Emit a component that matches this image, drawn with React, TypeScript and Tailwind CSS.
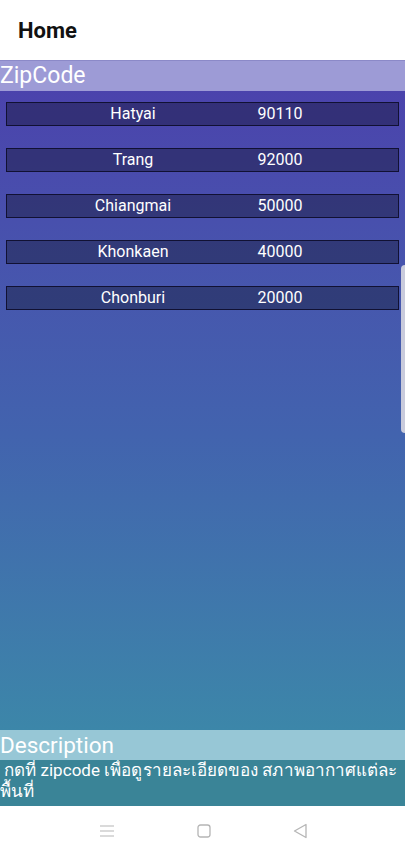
const zipcodes = [
  { name: "Hatyai", zip: "90110" },
  { name: "Trang", zip: "92000" },
  { name: "Chiangmai", zip: "50000" },
  { name: "Khonkaen", zip: "40000" },
  { name: "Chonburi", zip: "20000" },
];

export default function App() {
  return (
    <div
      className="relative flex h-[856px] w-[405px] flex-col overflow-hidden bg-white"
      style={{ fontFamily: "Roboto, 'Noto Sans', sans-serif" }}
    >
      {/* Header */}
      <div className="flex h-[60px] shrink-0 items-center px-[18px] shadow-sm">
        <h1 className="text-[22px] font-bold text-[#111]">Home</h1>
      </div>

      {/* Main */}
      <div className="flex flex-1 flex-col bg-gradient-to-b from-[#4b40ac] via-[#4263ae] to-[#3a8fa7]">
        <div className="h-[31px] border-t border-[#8b89c8] bg-[#9d9bd6] text-[23px] leading-[30px] text-white">
          ZipCode
        </div>

        <div className="flex flex-1 flex-col gap-[22px] px-[6px] pt-[11px]">
          {zipcodes.map((z) => (
            <div
              key={z.zip}
              className="flex h-[24px] items-center border border-[#111133] bg-black/30 text-[16px] text-white"
            >
              <span className="ml-[46px] w-[160px] text-center">{z.name}</span>
              <span className="w-[134px] text-center">{z.zip}</span>
            </div>
          ))}
        </div>

        <div className="h-[30px] bg-[#97c7d6] text-[22.5px] leading-[30px] text-white">
          Description
        </div>
        <div className="h-[46px] overflow-hidden bg-[#3a8497] text-[17px] leading-[21px] tracking-[0.05px] text-white">
          <p className="whitespace-nowrap pl-[4px]">กดที่ zipcode เพื่อดูรายละเอียดของ สภาพอากาศแต่ละ</p>
          <p>พื้นที่</p>
        </div>
      </div>

      {/* Nav bar */}
      <div className="flex h-[50px] shrink-0 items-center justify-center gap-[82px] bg-white text-[#b5b5b5]">
        <svg width="16" height="14" viewBox="0 0 16 14" fill="none" stroke="currentColor" strokeWidth="1.2">
          <path d="M1 2h14M1 7h14M1 12h14" />
        </svg>
        <svg width="14" height="14" viewBox="0 0 14 14" fill="none" stroke="currentColor" strokeWidth="1.3">
          <rect x="1" y="1" width="12" height="12" rx="2.5" />
        </svg>
        <svg width="14" height="16" viewBox="0 0 14 16" fill="none" stroke="currentColor" strokeWidth="1.3" strokeLinejoin="round">
          <path d="M13 1.5v13L1.5 8z" />
        </svg>
      </div>

      {/* Scroll indicator */}
      <div className="absolute right-0 top-[265px] h-[168px] w-[4px] rounded-l-full bg-[#c9cbdc]" />
    </div>
  );
}
